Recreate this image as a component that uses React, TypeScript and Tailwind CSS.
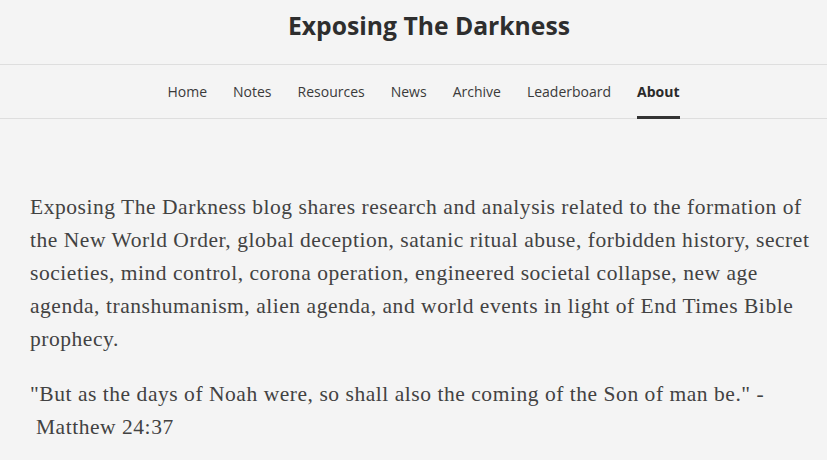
export default function App() {
  const nav = ["Home", "Notes", "Resources", "News", "Archive", "Leaderboard", "About"];

  return (
    <div className="min-h-[460px] w-[827px] bg-[#f4f4f4] text-[#333]">
      <header className="h-[65px] border-b border-[#dedede] flex justify-center pt-[8px] pl-[31px]">
        <h1 className="text-[24.7px] leading-[36px] font-bold text-[#2e2e2e]" style={{ fontFamily: '"Open Sans", sans-serif' }}>
          Exposing The Darkness
        </h1>
      </header>

      <nav className="h-[54px] border-b border-[#dedede] flex justify-center pl-[20px]" style={{ fontFamily: '"Open Sans", sans-serif' }}>
        <ul className="flex gap-[26px]">
          {nav.map((item) => (
            <li
              key={item}
              className={`h-[54px] flex items-center pt-[2px] text-[14px] border-b-[3px] ${
                item === "About" ? "font-bold text-[#2a2a2a] border-[#333]" : "text-[#3a3a3a] border-transparent"
              }`}
            >
              {item}
            </li>
          ))}
        </ul>
      </nav>

      <main className="pl-[30px] pr-[8px] pt-[72px] text-[21.5px] leading-[33px] tracking-[0.54px] text-[#424242]" style={{ fontFamily: '"Liberation Serif", serif' }}>
        <p className="mb-[22px]">
          Exposing The Darkness blog shares research and analysis related to the formation of the New World Order, global
          deception, satanic ritual abuse, forbidden history, secret societies, mind control, corona operation, engineered
          societal collapse, new age agenda, transhumanism, alien agenda, and world events in light of End Times Bible
          prophecy.
        </p>
        <p>
          "But as the days of Noah were, so shall also the coming of the Son of man be." -
          <br />
          &nbsp;Matthew 24:37
        </p>
      </main>
    </div>
  );
}
